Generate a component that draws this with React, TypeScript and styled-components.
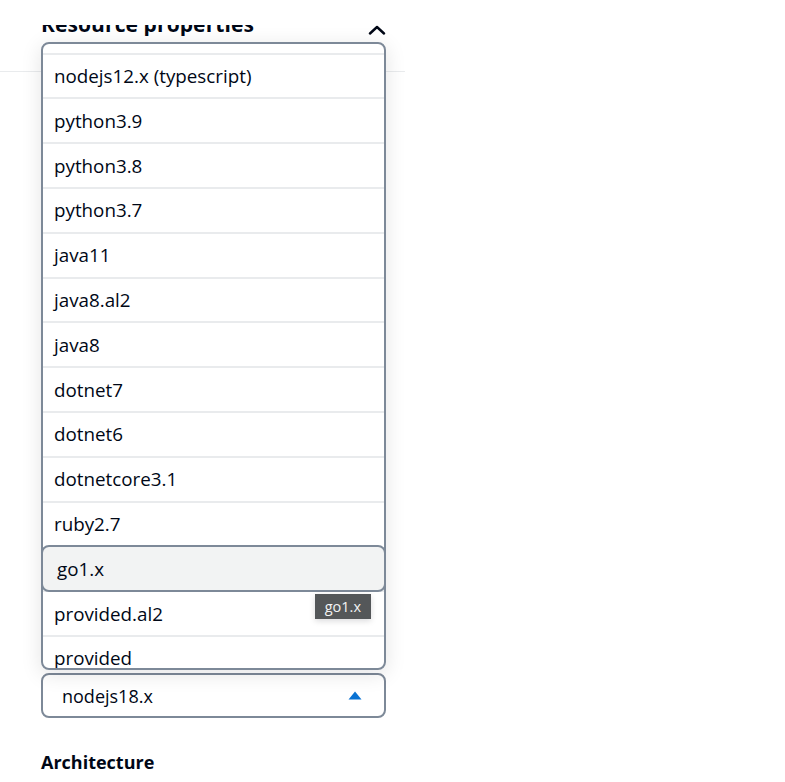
import React, { useLayoutEffect, useRef } from 'react'
import styled, { createGlobalStyle } from 'styled-components'

const GlobalStyle = createGlobalStyle`
    body {
        margin: 0;
        background: #ffffff;
        font-family: "Open Sans", "Noto Sans", sans-serif;
        color: #000716;
    }
`

const options = [
    'nodejs18.x',
    'nodejs16.x',
    'nodejs14.x',
    'nodejs12.x',
    'nodejs18.x (typescript)',
    'nodejs16.x (typescript)',
    'nodejs14.x (typescript)',
    'nodejs12.x (typescript)',
    'python3.9',
    'python3.8',
    'python3.7',
    'java11',
    'java8.al2',
    'java8',
    'dotnet7',
    'dotnet6',
    'dotnetcore3.1',
    'ruby2.7',
    'go1.x',
    'provided.al2',
    'provided',
]

const ITEM_HEIGHT = 44.8
const HIGHLIGHTED = 'go1.x'

const App = () => {
    const scrollRef = useRef<HTMLDivElement>(null)

    useLayoutEffect(() => {
        if (scrollRef.current) {
            scrollRef.current.scrollTop = Math.round(7 * ITEM_HEIGHT - 11)
        }
    }, [])

    return (
        <>
            <GlobalStyle />
            <Panel>
                <HeaderClip>
                    <Heading>Resource properties</Heading>
                    <Chevron width="18" height="10" viewBox="0 0 18 10">
                        <path d="M2 8.5 L9 2 L16 8.5" fill="none" stroke="#000716" strokeWidth="2.4" strokeLinecap="round" strokeLinejoin="round" />
                    </Chevron>
                </HeaderClip>
                <Divider />

                <Field>
                    <Dropdown>
                        <Scroller ref={scrollRef}>
                            {options.map((opt) =>
                                opt === HIGHLIGHTED ? (
                                    <Option key={opt} $active>
                                        {opt}
                                        <Tooltip>{opt}</Tooltip>
                                    </Option>
                                ) : (
                                    <Option key={opt}>{opt}</Option>
                                )
                            )}
                        </Scroller>
                    </Dropdown>

                    <Trigger>
                        <span>nodejs18.x</span>
                        <svg width="14" height="9" viewBox="0 0 14 9">
                            <path d="M7 0.5 L13.5 8.5 L0.5 8.5 Z" fill="#0972d3" />
                        </svg>
                    </Trigger>
                </Field>

                <SectionTitle>Architecture</SectionTitle>
            </Panel>
        </>
    )
}

const Panel = styled.div`
    width: 405px;
    padding-bottom: 20px;
`

const HeaderClip = styled.div`
    margin: 25px 19px 0 41px;
    height: 11px;
    overflow: hidden;
    display: flex;
    justify-content: space-between;
    align-items: flex-end;
`

const Heading = styled.h2`
    margin: 0;
    font-size: 21px;
    line-height: 23px;
    font-weight: 700;
    letter-spacing: 0.1px;
`

const Chevron = styled.svg`
    flex: none;
    margin-bottom: 1px;
`

const Divider = styled.div`
    margin-top: 35px;
    height: 1px;
    background: #e9ebed;
`

const Field = styled.div`
    position: relative;
    margin: 601px 19px 0 41px;
`

const Dropdown = styled.div`
    position: absolute;
    left: 0;
    right: 0;
    bottom: calc(100% + 3px);
    height: 628px;
    border-radius: 8px;
    background: #ffffff;
    box-shadow: 0 4px 20px 1px rgba(0, 7, 22, 0.1);
    z-index: 5;

    &::after {
        content: '';
        position: absolute;
        inset: 0;
        border: 2px solid #7d8998;
        border-radius: 8px;
        pointer-events: none;
        z-index: 1;
    }
`

const Scroller = styled.div`
    height: 100%;
    overflow-y: auto;
    border-radius: 8px;
    scrollbar-width: none;

    &::-webkit-scrollbar {
        display: none;
    }
`

const Option = styled.div<{ $active?: boolean }>`
    box-sizing: border-box;
    height: ${({ $active }) => ($active ? ITEM_HEIGHT + 2 : ITEM_HEIGHT)}px;
    display: flex;
    align-items: center;
    padding-left: ${({ $active }) => ($active ? 14 : 13)}px;
    font-size: 18.8px;
    background: ${({ $active }) => ($active ? '#f2f3f3' : '#ffffff')};
    border-top: 2px solid ${({ $active }) => ($active ? '#7d8998' : '#e9ebed')};
    border: ${({ $active }) => ($active ? '2px solid #7d8998' : undefined)};
    border-radius: ${({ $active }) => ($active ? '8px' : '0')};
    margin-bottom: ${({ $active }) => ($active ? '-2px' : '0')};
    position: ${({ $active }) => ($active ? 'relative' : 'static')};
    z-index: ${({ $active }) => ($active ? 2 : 'auto')};
`

const Tooltip = styled.div`
    position: absolute;
    top: calc(100% + 4px);
    right: 13px;
    height: 25px;
    padding: 0 10px;
    display: flex;
    align-items: center;
    background: #545759;
    color: #f2f3f3;
    font-size: 14.5px;
    box-shadow: 0 2px 6px rgba(0, 7, 22, 0.15);
    z-index: 3;
`

const Trigger = styled.div`
    box-sizing: border-box;
    height: 45px;
    border: 2px solid #7d8998;
    border-radius: 8px;
    padding: 0 22px 0 19px;
    display: flex;
    align-items: center;
    justify-content: space-between;
    font-size: 18px;
    background: #ffffff;
`

const SectionTitle = styled.h3`
    margin: 33px 0 0 41px;
    font-size: 18px;
    line-height: 22px;
    font-weight: 700;
`

export default App
